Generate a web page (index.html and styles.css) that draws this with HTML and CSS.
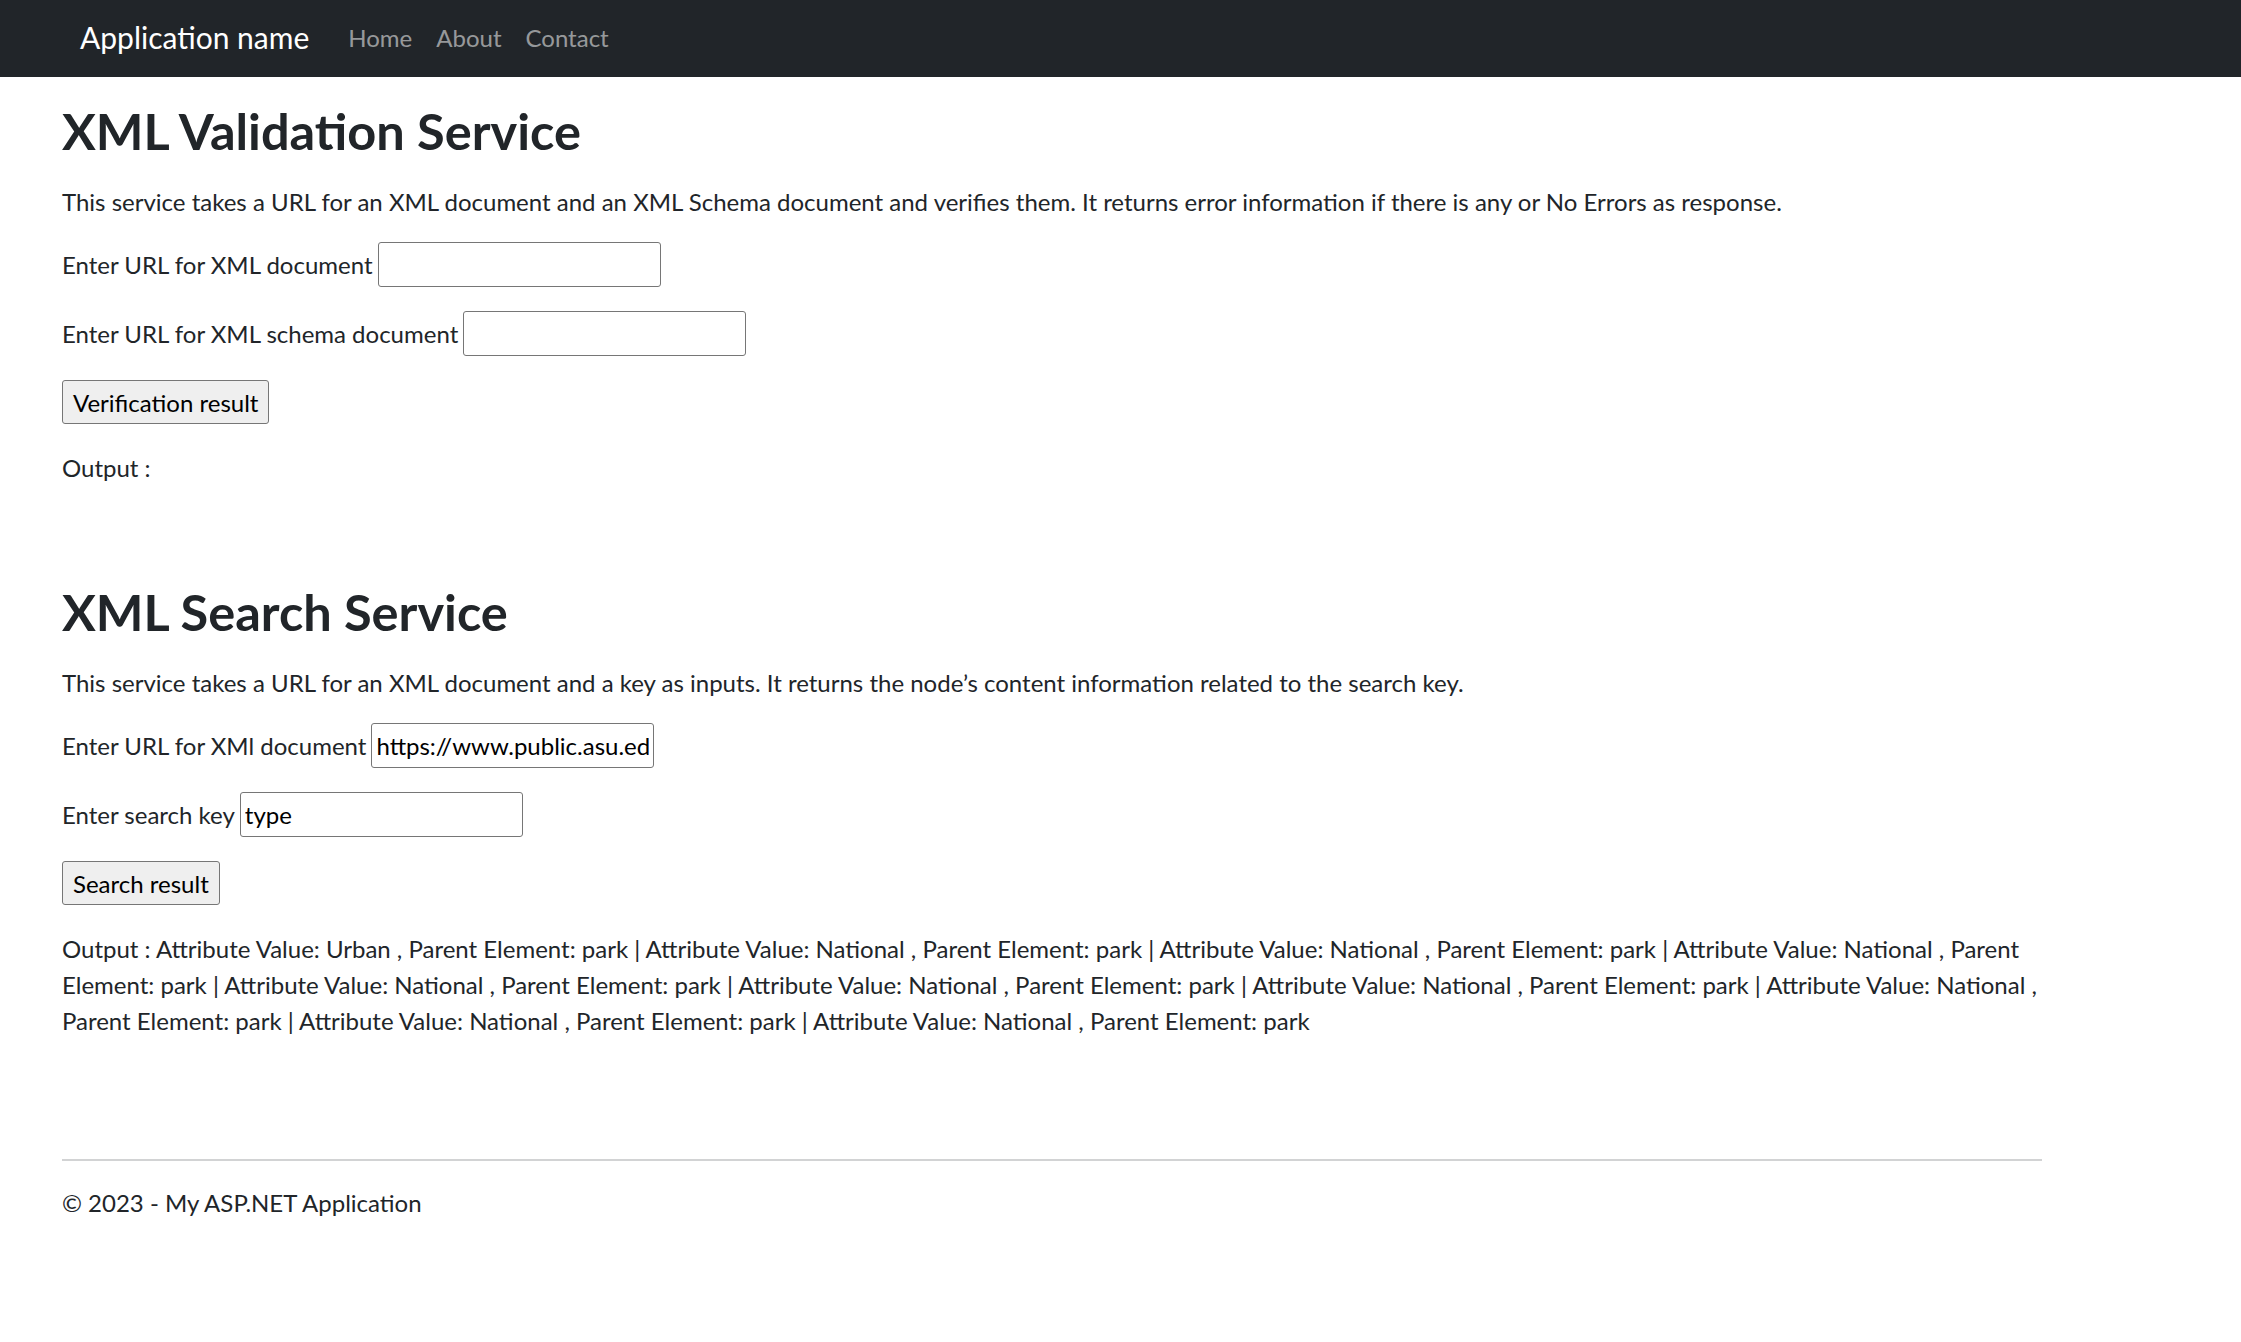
FILE: index.html
```html
<!DOCTYPE html>
<html lang="en">
<head>
<meta charset="utf-8">
<title>XML Services</title>
<link rel="stylesheet" href="styles.css">
</head>
<body>
<nav class="navbar">
  <a class="brand" href="#">Application name</a>
  <ul class="nav-links">
    <li><a href="#">Home</a></li>
    <li><a href="#">About</a></li>
    <li><a href="#">Contact</a></li>
  </ul>
</nav>
<main class="body-content">
  <section class="service">
    <h1 class="title">XML Validation Service</h1>
    <p class="intro">This service takes a URL for an XML document and an XML Schema document and verifies them. It returns error information if there is any or No Errors as response.</p>
    <p class="row">Enter URL for XML document <input class="field" type="text"></p>
    <p class="row">Enter URL for XML schema document <input class="field" type="text"></p>
    <p class="row action"><button class="btn" type="button">Verification result</button></p>
    <p>Output :</p>
  </section>
  <section class="service second">
    <h1 class="title">XML Search Service</h1>
    <p class="intro">This service takes a URL for an XML document and a key as inputs. It returns the node’s content information related to the search key.</p>
    <p class="row">Enter URL for XMl document <input class="field" type="text" value="https://www.public.asu.edu/"></p>
    <p class="row">Enter search key <input class="field" type="text" value="type"></p>
    <p class="row action"><button class="btn" type="button">Search result</button></p>
    <p>Output : Attribute Value: Urban , Parent Element: park | Attribute Value: National , Parent Element: park | Attribute Value: National , Parent Element: park | Attribute Value: National , Parent Element: park | Attribute Value: National , Parent Element: park | Attribute Value: National , Parent Element: park | Attribute Value: National , Parent Element: park | Attribute Value: National , Parent Element: park | Attribute Value: National , Parent Element: park | Attribute Value: National , Parent Element: park</p>
  </section>
  <footer class="footer">
    <hr class="rule">
    <p>© 2023 - My ASP.NET Application</p>
  </footer>
</main>
</body>
</html>
```
FILE: styles.css
```css
html, body {
  margin: 0;
  padding: 0;
  background: #ffffff;
}
body {
  font-family: "Lato", "Liberation Sans", sans-serif;
  font-size: 24px;
  line-height: 36px;
  color: #212529;
}
.navbar {
  display: flex;
  align-items: center;
  height: 77px;
  background: #212529;
  padding: 0 0 2px 80px;
  box-sizing: border-box;
}
.brand {
  color: #ffffff;
  font-size: 30px;
  line-height: 45px;
  text-decoration: none;
  margin-right: 27px;
}
.nav-links {
  display: flex;
  list-style: none;
  margin: 0;
  padding: 0;
}
.nav-links a {
  display: block;
  padding: 0 12px;
  color: rgba(255, 255, 255, 0.55);
  text-decoration: none;
  font-size: 24px;
  line-height: 36px;
}
.body-content {
  width: 1980px;
  padding: 24px 0 0 62px;
}
.title {
  font-size: 50.5px;
  line-height: 60px;
  font-weight: 700;
  margin: 0 0 23px 0;
}
.second {
  margin-top: 96px;
}
p {
  margin: 0 0 24px 0;
}
.intro {
  margin-bottom: 22px;
}
.row {
  display: flex;
  align-items: baseline;
  gap: 5px;
}
.action {
  margin-bottom: 26px;
}
.field {
  box-sizing: border-box;
  width: 283px;
  height: 45px;
  padding: 0 4px;
  border: 1px solid #767676;
  border-radius: 3px;
  font-family: "Lato", "Liberation Sans", sans-serif;
  font-size: 24px;
  color: #000000;
  background: #ffffff;
}
.btn {
  box-sizing: border-box;
  height: 44px;
  padding: 0 10px;
  border: 1px solid #767676;
  border-radius: 3px;
  background: #efefef;
  font-family: "Lato", "Liberation Sans", sans-serif;
  font-size: 24px;
  color: #000000;
}
.footer {
  margin-top: 120px;
}
.rule {
  margin: 0 0 24px 0;
  border: 0;
  border-top: 2px solid #d2d3d4;
  height: 0;
}
```
